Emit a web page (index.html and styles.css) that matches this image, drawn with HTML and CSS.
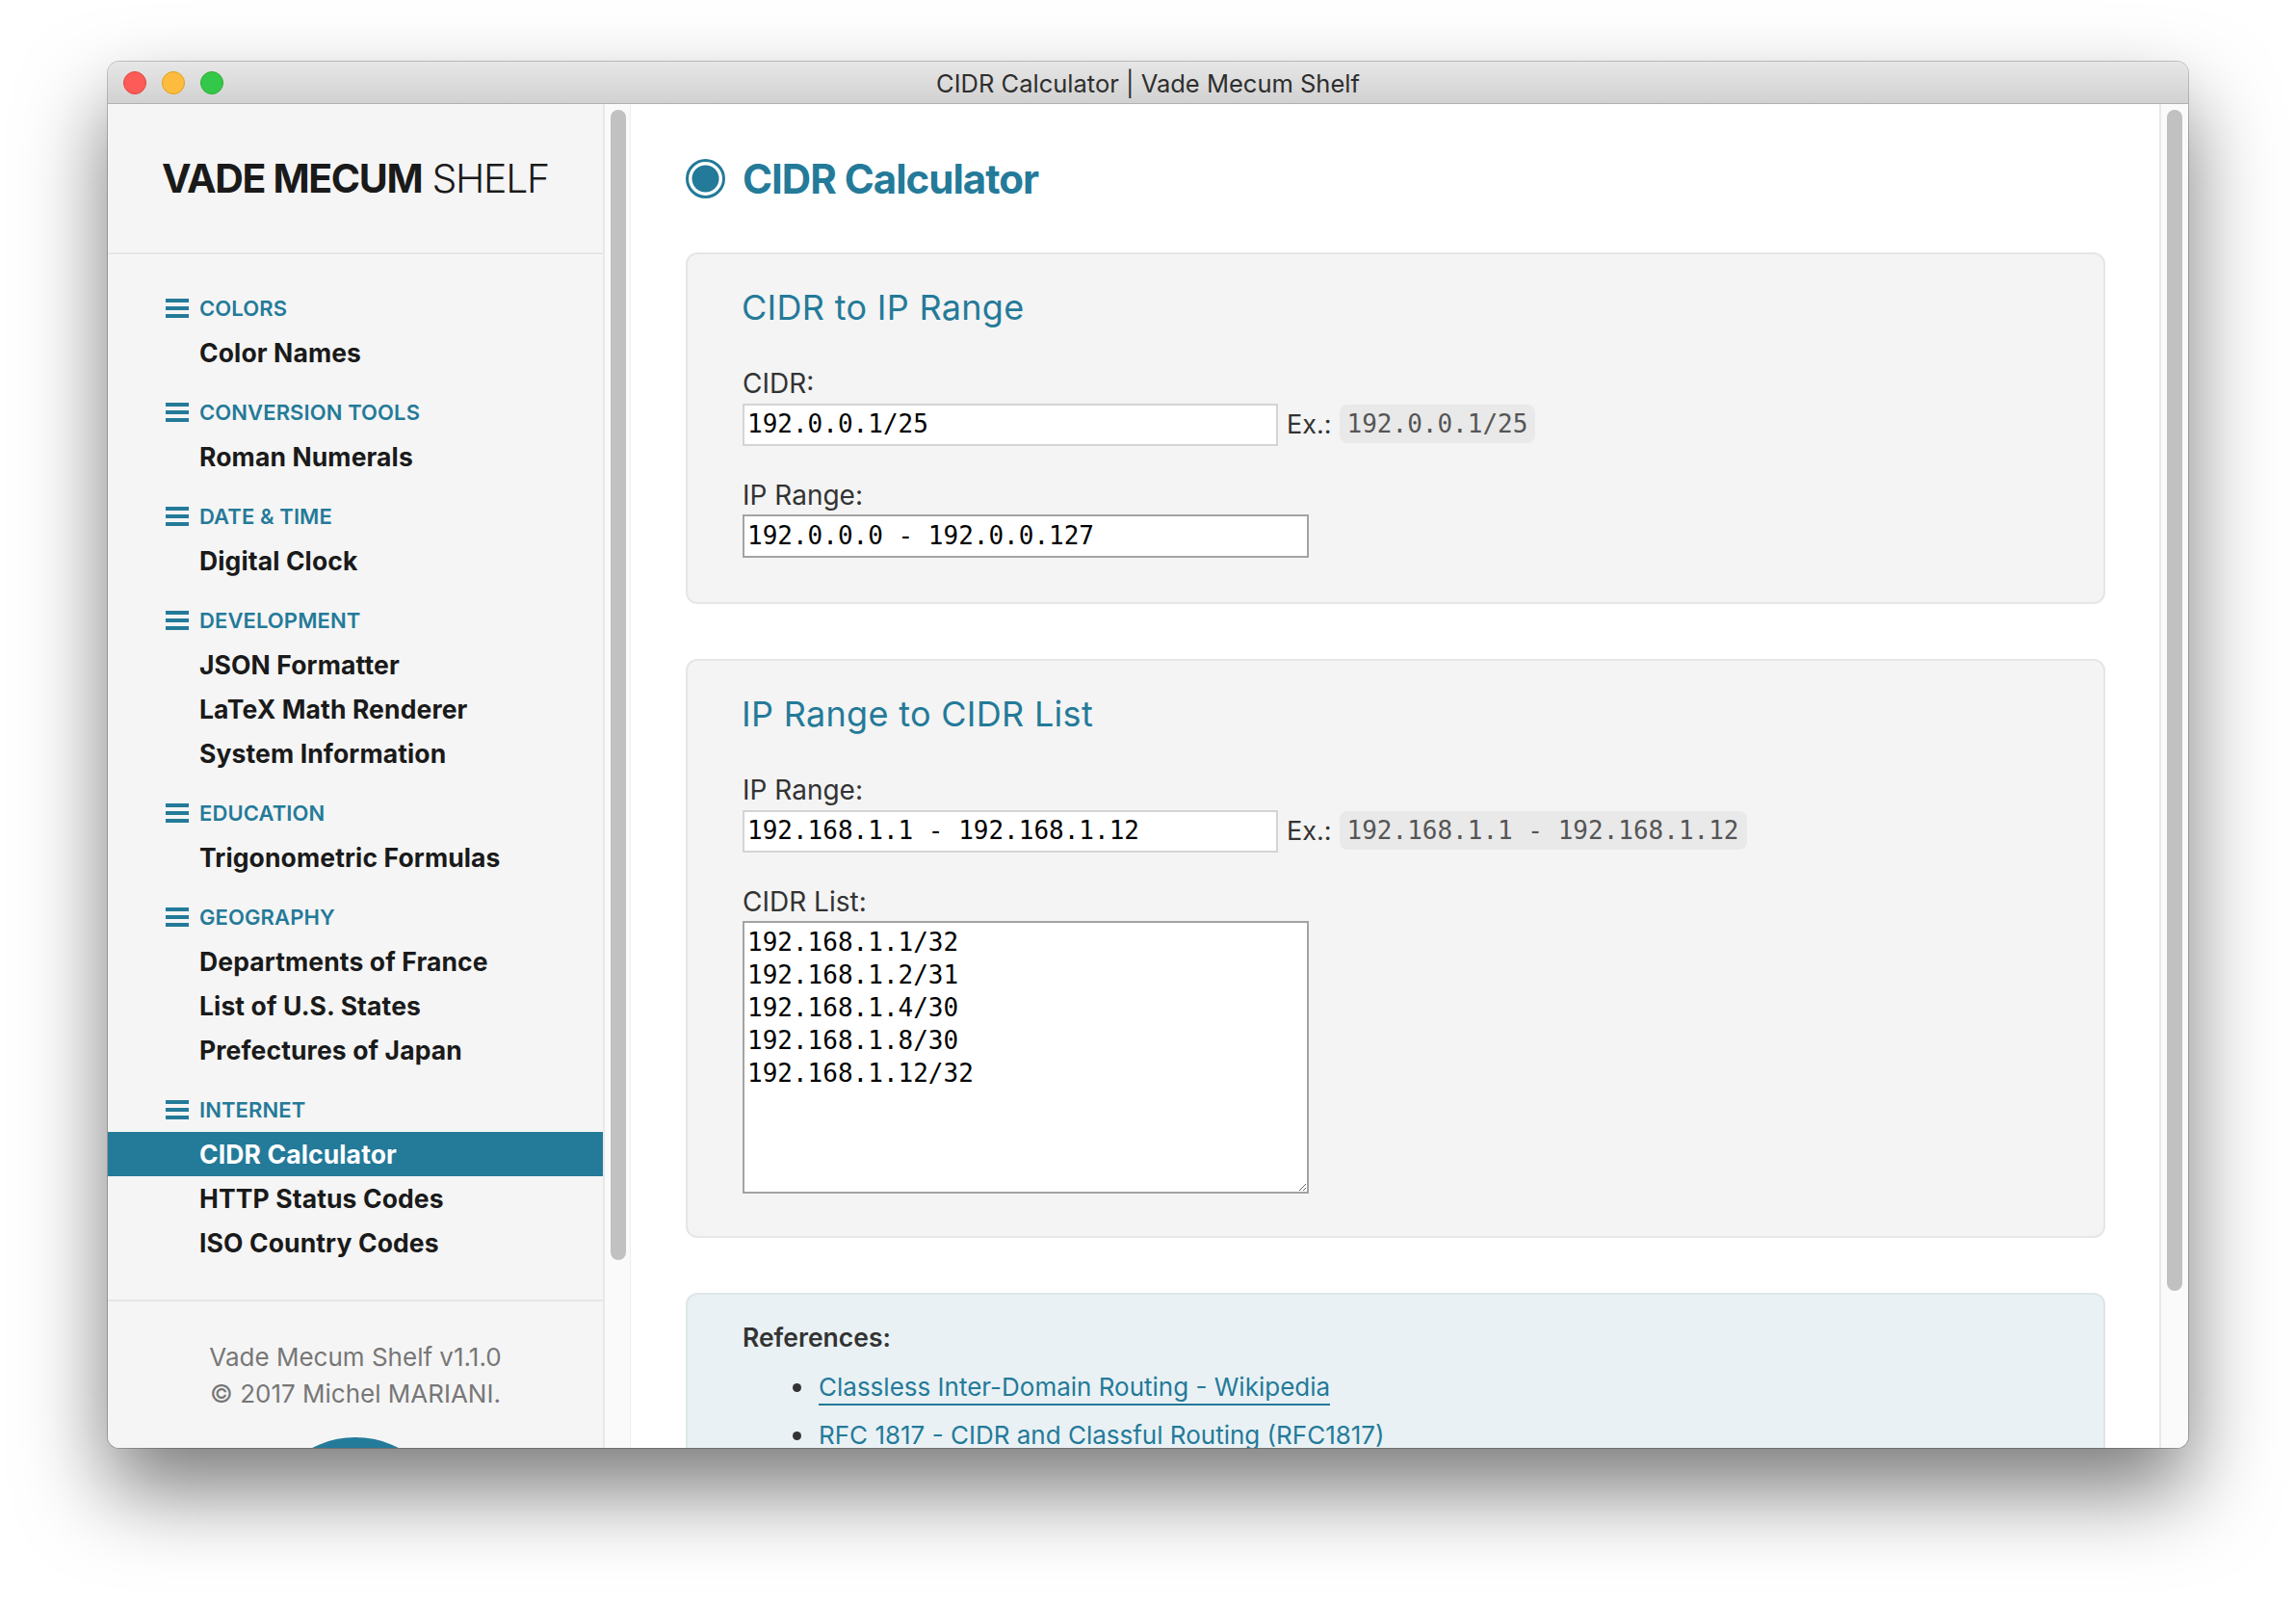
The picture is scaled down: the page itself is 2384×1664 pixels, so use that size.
FILE: index.html
```html
<!DOCTYPE html>
<html lang="en">
<head>
    <meta charset="UTF-8">
    <title>CIDR Calculator | Vade Mecum Shelf</title>
    <link rel="stylesheet" href="styles.css">
</head>
<body>
    <div class="window">
        <div class="titlebar">
            <div class="lights">
                <span class="light red"></span>
                <span class="light yellow"></span>
                <span class="light green"></span>
            </div>
            <div class="window-title">CIDR Calculator | Vade Mecum Shelf</div>
        </div>
        <div class="window-body">
            <aside class="sidebar">
                <div class="logo"><b>VADE MECUM</b> <span>SHELF</span></div>
                <nav class="nav">
                    <div class="nav-group">
                        <div class="nav-heading"><svg class="bars" viewBox="0 0 24 20"><rect width="24" height="4"/><rect y="8" width="24" height="4"/><rect y="16" width="24" height="4"/></svg>COLORS</div>
                        <a class="nav-item">Color Names</a>
                    </div>
                    <div class="nav-group">
                        <div class="nav-heading"><svg class="bars" viewBox="0 0 24 20"><rect width="24" height="4"/><rect y="8" width="24" height="4"/><rect y="16" width="24" height="4"/></svg>CONVERSION TOOLS</div>
                        <a class="nav-item">Roman Numerals</a>
                    </div>
                    <div class="nav-group">
                        <div class="nav-heading"><svg class="bars" viewBox="0 0 24 20"><rect width="24" height="4"/><rect y="8" width="24" height="4"/><rect y="16" width="24" height="4"/></svg>DATE &amp; TIME</div>
                        <a class="nav-item">Digital Clock</a>
                    </div>
                    <div class="nav-group">
                        <div class="nav-heading"><svg class="bars" viewBox="0 0 24 20"><rect width="24" height="4"/><rect y="8" width="24" height="4"/><rect y="16" width="24" height="4"/></svg>DEVELOPMENT</div>
                        <a class="nav-item">JSON Formatter</a>
                        <a class="nav-item">LaTeX Math Renderer</a>
                        <a class="nav-item">System Information</a>
                    </div>
                    <div class="nav-group">
                        <div class="nav-heading"><svg class="bars" viewBox="0 0 24 20"><rect width="24" height="4"/><rect y="8" width="24" height="4"/><rect y="16" width="24" height="4"/></svg>EDUCATION</div>
                        <a class="nav-item">Trigonometric Formulas</a>
                    </div>
                    <div class="nav-group">
                        <div class="nav-heading"><svg class="bars" viewBox="0 0 24 20"><rect width="24" height="4"/><rect y="8" width="24" height="4"/><rect y="16" width="24" height="4"/></svg>GEOGRAPHY</div>
                        <a class="nav-item">Departments of France</a>
                        <a class="nav-item">List of U.S. States</a>
                        <a class="nav-item">Prefectures of Japan</a>
                    </div>
                    <div class="nav-group">
                        <div class="nav-heading"><svg class="bars" viewBox="0 0 24 20"><rect width="24" height="4"/><rect y="8" width="24" height="4"/><rect y="16" width="24" height="4"/></svg>INTERNET</div>
                        <a class="nav-item active">CIDR Calculator</a>
                        <a class="nav-item">HTTP Status Codes</a>
                        <a class="nav-item">ISO Country Codes</a>
                    </div>
                </nav>
                <footer class="side-footer">
                    <p>Vade Mecum Shelf v1.1.0</p>
                    <p>© 2017 Michel MARIANI.</p>
                    <div class="badge"></div>
                </footer>
            </aside>
            <div class="track side-track"><div class="thumb side-thumb"></div></div>
            <main class="main">
                <h1 class="page-title">
                    <svg class="radio" viewBox="0 0 41 41"><circle cx="20.5" cy="20.5" r="19" fill="none" stroke="#247a99" stroke-width="3"/><circle cx="20.5" cy="20.5" r="14" fill="#247a99"/></svg>
                    CIDR Calculator
                </h1>
                <section class="card">
                    <h2>CIDR to IP Range</h2>
                    <label class="field-label first">CIDR:</label>
                    <div class="input-row">
                        <input class="mono in" type="text" value="192.0.0.1/25">
                        <span class="ex">Ex.:</span>
                        <code class="mono sample">192.0.0.1/25</code>
                    </div>
                    <label class="field-label">IP Range:</label>
                    <input class="mono out" type="text" value="192.0.0.0 - 192.0.0.127" readonly>
                </section>
                <section class="card">
                    <h2>IP Range to CIDR List</h2>
                    <label class="field-label first">IP Range:</label>
                    <div class="input-row">
                        <input class="mono in" type="text" value="192.168.1.1 - 192.168.1.12">
                        <span class="ex">Ex.:</span>
                        <code class="mono sample">192.168.1.1 - 192.168.1.12</code>
                    </div>
                    <label class="field-label">CIDR List:</label>
                    <textarea class="mono list" readonly>192.168.1.1/32
192.168.1.2/31
192.168.1.4/30
192.168.1.8/30
192.168.1.12/32</textarea>
                </section>
                <section class="card refs">
                    <strong>References:</strong>
                    <ul>
                        <li><a>Classless Inter-Domain Routing - Wikipedia</a></li>
                        <li><a>RFC 1817 - CIDR and Classful Routing (RFC1817)</a></li>
                    </ul>
                </section>
            </main>
            <div class="track main-track"><div class="thumb main-thumb"></div></div>
        </div>
    </div>
</body>
</html>
```
FILE: styles.css
```css
html, body {
    height: 100%;
    margin: 0;
    background-color: #fff;
    overflow: hidden;
}
body {
    box-sizing: border-box;
    padding: 64px 112px 0;
    font-family: Inter, "Noto Sans", sans-serif;
    color: #333;
}
.window {
    height: 1439px;
    border-radius: 12px;
    overflow: hidden;
    display: flex;
    flex-direction: column;
    background-color: #fff;
    box-shadow: 0 0 0 1px rgba(0, 0, 0, 0.22), 0 44px 88px rgba(0, 0, 0, 0.52);
}

/* title bar */
.titlebar {
    flex: none;
    height: 43px;
    display: flex;
    align-items: center;
    position: relative;
    background: linear-gradient(#e7e7e7, #d1d1d1);
    border-bottom: 1px solid #b1b1b1;
}
.lights {
    display: flex;
    gap: 16px;
    padding-left: 16px;
}
.light {
    width: 24px;
    height: 24px;
    border-radius: 50%;
    box-sizing: border-box;
}
.red { background-color: #fc5b57; border: 1px solid #e2463f; }
.yellow { background-color: #fdbc40; border: 1px solid #e1a116; }
.green { background-color: #34c84a; border: 1px solid #2dac2f; }
.window-title {
    position: absolute;
    left: 0;
    right: 0;
    padding-top: 1px;
    text-align: center;
    font-size: 25.5px;
    color: #2e2e2e;
}

.window-body {
    flex: 1;
    display: flex;
    min-height: 0;
}

/* sidebar */
.sidebar {
    flex: none;
    width: 514px;
    background-color: #f5f5f5;
    overflow: hidden;
}
.logo {
    height: 156px;
    box-sizing: border-box;
    border-bottom: 2px solid #e6e6e6;
    padding-left: 56px;
    line-height: 154px;
    font-size: 41px;
    letter-spacing: -1.35px;
    color: #1a1a1a;
    white-space: nowrap;
}
.logo b { font-weight: 700; }
.logo span { font-weight: 300; }
.nav {
    padding-top: 32px;
    border-bottom: 2px solid #e6e6e6;
    padding-bottom: 21px;
}
.nav-group {
    margin-bottom: 15px;
}
.nav-heading {
    height: 47px;
    display: flex;
    align-items: center;
    padding-left: 60px;
    font-size: 22px;
    font-weight: 600;
    letter-spacing: 0.1px;
    color: #247a99;
}
.bars {
    width: 24px;
    height: 20px;
    margin-right: 11px;
    fill: #247a99;
}
.nav-item {
    display: block;
    height: 46px;
    line-height: 46px;
    padding-left: 95px;
    font-size: 26.5px;
    font-weight: 700;
    letter-spacing: 0.12px;
    color: #1a1a1a;
}
.nav-item.active {
    background-color: #247a99;
    color: #fff;
}
.side-footer {
    padding-top: 39px;
    text-align: center;
    font-size: 26px;
    line-height: 38px;
    color: #777;
}
.side-footer p {
    margin: 0;
}
.badge {
    width: 194px;
    height: 194px;
    margin: 26px auto 0;
    border-radius: 50%;
    background-color: #247a99;
}

/* fake scroll bars */
.track {
    flex: none;
    box-sizing: border-box;
    padding-top: 6px;
    background-color: #fafafa;
    border-left: 2px solid #e8e8e8;
}
.side-track {
    width: 29px;
    padding-left: 6px;
    border-right: 1px solid #eee;
}
.main-track {
    width: 30px;
    padding-left: 6px;
}
.thumb {
    width: 16px;
    border-radius: 8px;
    background-color: #c1c1c1;
}
.side-thumb { height: 1194px; }
.main-thumb { height: 1226px; }

/* content */
.main {
    flex: 1;
    min-width: 0;
    overflow: hidden;
    padding: 0 56px 0 57px;
}
.page-title {
    height: 154px;
    margin: 0;
    display: flex;
    align-items: center;
    gap: 18px;
    font-size: 42px;
    font-weight: 700;
    letter-spacing: -1px;
    color: #247a99;
}
.radio {
    width: 41px;
    height: 41px;
}
.card {
    box-sizing: border-box;
    margin-bottom: 57px;
    padding: 33px 56px 46px 57px;
    border: 2px solid #e6e6e6;
    border-radius: 12px;
    background-color: #f4f4f4;
}
.card h2 {
    margin: 0 0 0 -1px;
    font-size: 36px;
    font-weight: 400;
    letter-spacing: 0.3px;
    line-height: 44px;
    color: #247a99;
}
.field-label {
    display: block;
    margin-top: 34px;
    margin-bottom: 4px;
    font-size: 28px;
    line-height: 34px;
}
.field-label.first {
    margin-top: 40px;
}
.mono {
    font-family: "DejaVu Sans Mono", monospace;
    font-size: 26px;
}
.input-row {
    display: flex;
    align-items: center;
}
.in, .out, .list {
    display: block;
    box-sizing: border-box;
    outline: none;
    background-color: #fff;
    color: #000;
    margin: 0;
}
.in {
    width: 556px;
    height: 44px;
    padding: 0 3px 2px;
    border: 2px solid #d4d4d4;
}
.out {
    width: 588px;
    height: 45px;
    margin-top: -1px;
    padding: 0 3px 2px;
    border: 2px solid #a3a3a3;
}
.list {
    width: 588px;
    height: 283px;
    margin-top: -1px;
    margin-bottom: -2px;
    padding: 3px 3px 2px;
    border: 2px solid #a3a3a3;
    line-height: 34px;
}
.ex {
    margin-left: 9px;
    margin-right: 8px;
    margin-bottom: 2px;
    font-size: 27px;
}
.sample {
    padding: 0 8px;
    margin-bottom: 2px;
    line-height: 40px;
    border-radius: 8px;
    background-color: #e9e9e9;
    color: #555;
}
.refs {
    padding-top: 27px;
    background-color: #e9f1f4;
    border-color: #dde6e9;
    font-size: 26px;
    line-height: 34px;
}
.refs strong {
    font-weight: 600;
    font-size: 26.5px;
}
.refs ul {
    margin: 17px 0 0;
    padding-left: 79px;
    list-style: none;
}
.refs li {
    display: flex;
    margin-bottom: 14px;
}
.refs li::before {
    content: "";
    flex: none;
    width: 9px;
    height: 9px;
    margin: 13px 18px 0 -27px;
    border-radius: 50%;
    background-color: #333;
}
.refs a {
    color: #247a99;
    border-bottom: 2px solid #247a99;
}
```
